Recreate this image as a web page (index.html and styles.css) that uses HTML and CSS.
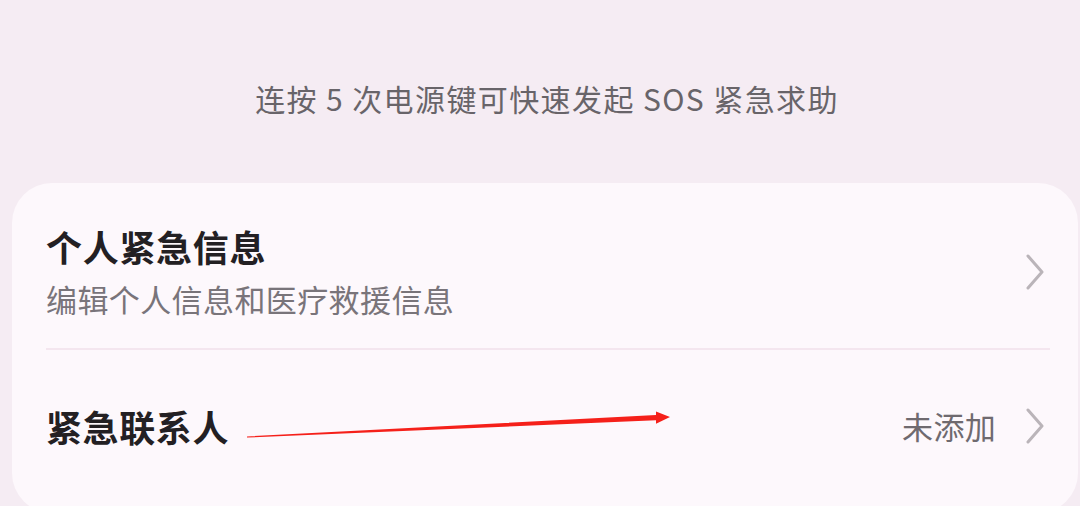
FILE: index.html
```html
<!DOCTYPE html>
<html lang="zh-CN">
<head>
<meta charset="utf-8">
<link rel="stylesheet" href="styles.css">
</head>
<body>
<div class="page">
  <div class="hint">连按 5 次电源键可快速发起 SOS 紧急求助</div>
  <div class="card">
    <div class="row row-first">
      <div class="texts">
        <div class="title">个人紧急信息</div>
        <div class="sub">编辑个人信息和医疗救援信息</div>
      </div>
      <svg class="chev" viewBox="0 0 20 36" width="20" height="36"><polyline points="3,2 17,18 3,34" fill="none" stroke="#bab4b9" stroke-width="3" stroke-linecap="round" stroke-linejoin="round"/></svg>
    </div>
    <div class="divider"></div>
    <div class="row row-second">
      <div class="texts">
        <div class="title title-2">紧急联系人</div>
      </div>
      <span class="value">未添加</span>
      <svg class="chev" viewBox="0 0 20 36" width="20" height="36"><polyline points="3,2 17,18 3,34" fill="none" stroke="#bab4b9" stroke-width="3" stroke-linecap="round" stroke-linejoin="round"/></svg>
    </div>
  </div>
</div>
<svg class="arrow" width="1080" height="506" viewBox="0 0 1080 506">
  <polygon fill="#f5201a" points="247,437.6 656,420.2 656,423.8 670,417 656,411.6 656,415.1 247,436.4"/>
</svg>
</body>
</html>
```

FILE: styles.css
```css
html, body {
  margin: 0;
  padding: 0;
}
body {
  width: 1080px;
  height: 506px;
  overflow: hidden;
  background: #f5ecf3;
  font-family: "Noto Sans CJK SC", "Noto Sans", sans-serif;
  position: relative;
}
.page {
  display: flex;
  flex-direction: column;
}
.hint {
  height: 183px;
  box-sizing: border-box;
  padding-top: 78px;
  padding-left: 14px;
  text-align: center;
  font-size: 30px;
  line-height: 40px;
  letter-spacing: 1.4px;
  color: #686469;
}
.card {
  margin-left: 12px;
  width: 1066px;
  height: 330px;
  background: #fdf8fc;
  border-radius: 40px;
  box-sizing: border-box;
  padding: 0 33px 0 34px;
}
.row {
  display: flex;
  align-items: center;
}
.row-first {
  padding-top: 41px;
  padding-bottom: 29px;
}
.row-second {
  height: 152px;
}
.texts {
  flex: 1;
  display: flex;
  flex-direction: column;
}
.title {
  font-size: 36px;
  line-height: 44px;
  font-weight: 700;
  letter-spacing: 0.7px;
  color: #232023;
}
.title-2 {
  letter-spacing: 0.6px;
}
.sub {
  margin-top: 11px;
  font-size: 31px;
  line-height: 40px;
  letter-spacing: 0.4px;
  color: #79747a;
}
.divider {
  height: 2px;
  margin-right: -5px;
  background: #f4e6ef;
}
.value {
  font-size: 31px;
  line-height: 40px;
  letter-spacing: 0.3px;
  color: #6f6a6f;
  margin-right: 29px;
}
.chev {
  display: block;
  flex: none;
}
.arrow {
  position: absolute;
  left: 0;
  top: 0;
  pointer-events: none;
}
```
